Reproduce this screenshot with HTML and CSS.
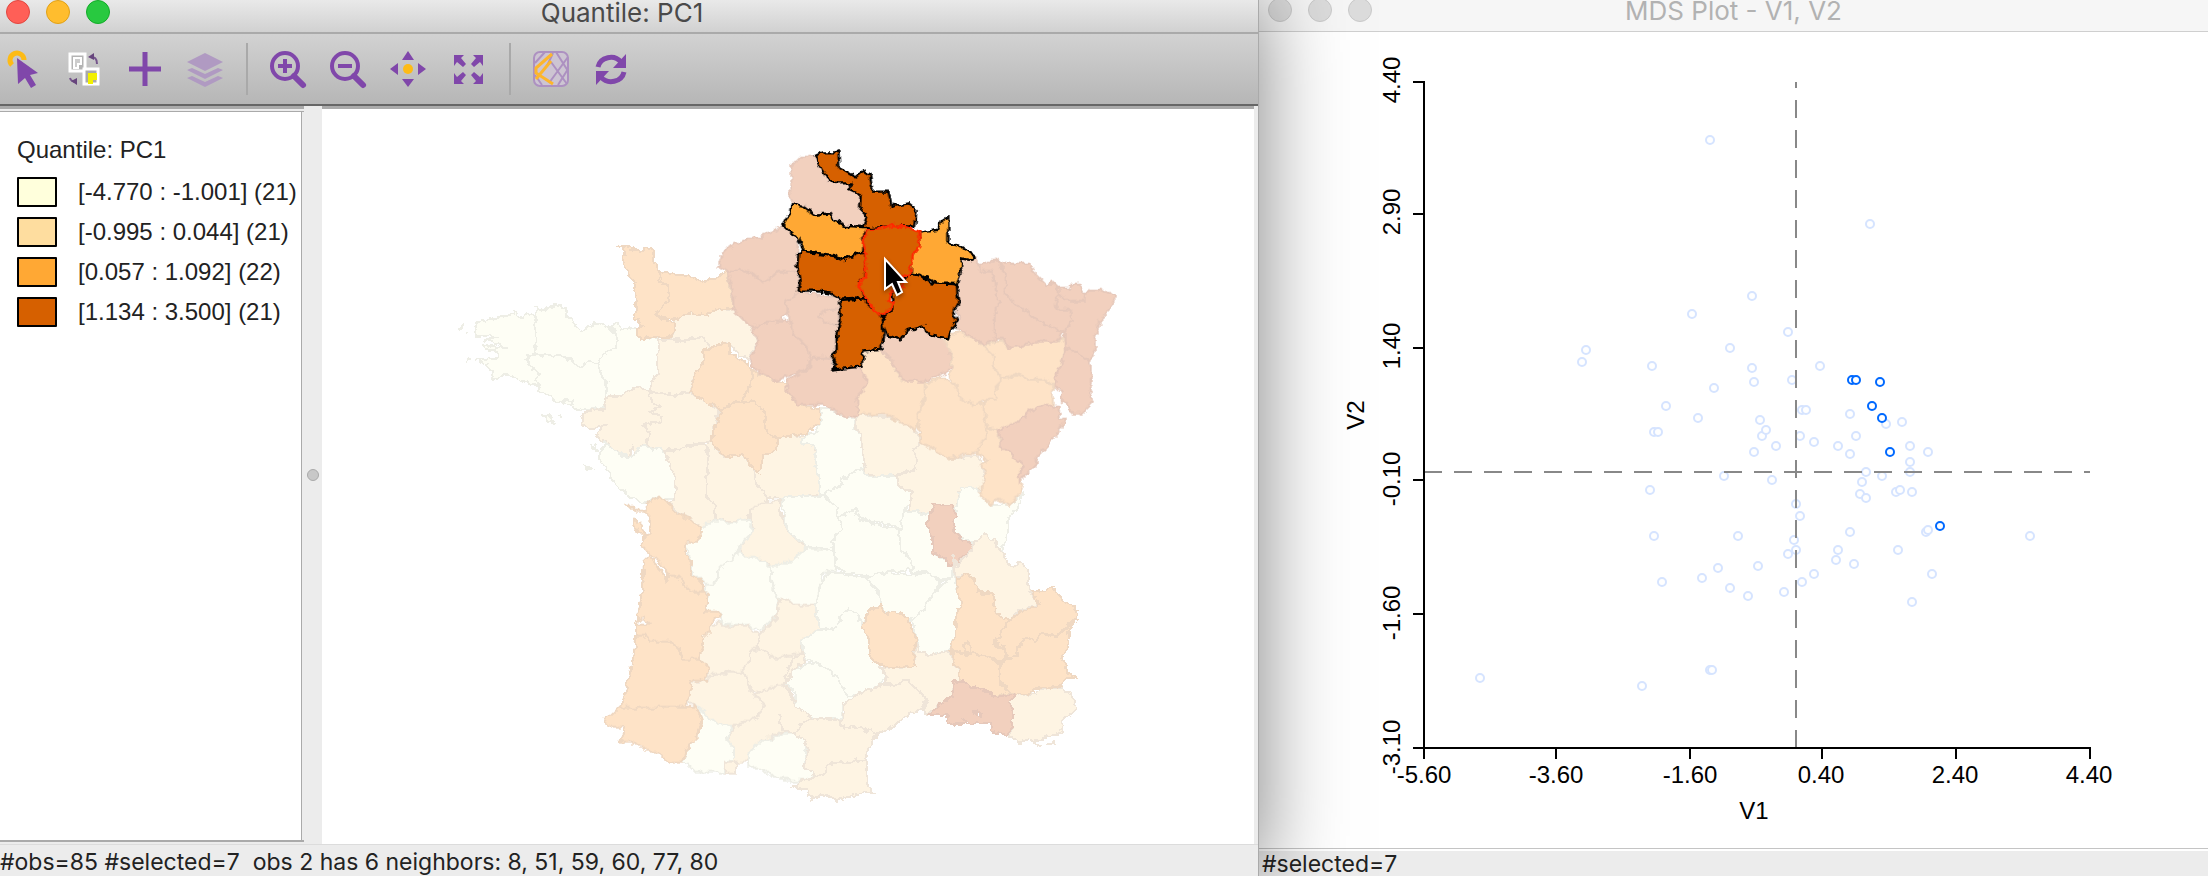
FILE: index.html
```html
<!DOCTYPE html>
<html lang="en">
<head>
<meta charset="utf-8">
<title>Quantile: PC1</title>
<link rel="stylesheet" href="styles.css">
</head>
<body>
<main class="desk">
<section class="window window-map">
  <header class="titlebar">
    <div class="lights">
      <button class="light red" aria-label="Close"></button>
      <button class="light amber" aria-label="Minimize"></button>
      <button class="light green" aria-label="Zoom"></button>
    </div>
    <h1 class="title">Quantile: PC1</h1>
  </header>
  <nav class="toolbar">
    <button class="tool" aria-label="Select"><svg viewBox="0 0 36 36"><path d="M5 14A7 7 0 1 1 17 9" fill="none" stroke="#fdbb16" stroke-width="5"/><path d="M10 7L31 22L23 24L29 34L24 37L18 27L11 33Z" fill="#8047aa"/></svg></button>
    <button class="tool" aria-label="Invert selection"><svg viewBox="0 0 36 36"><path d="M3 3h15v17H3z" fill="#b4b4b4" stroke="#fff" stroke-width="3"/><path d="M7 7h7v6h-3v4H7z" fill="#ccc" stroke="#fff" stroke-width="2"/><path d="M17 18h14v15H17z" fill="#aaa" stroke="#fff" stroke-width="3"/><path d="M21 22h9v7h-4v4h-5z" fill="#f2f000"/><path d="M23 6Q30 5 30 13M3 27Q4 31 10 31" fill="none" stroke="#75558c" stroke-width="2"/><path d="M21 6l6-4v7zM10 34V27l-6 3z" fill="#67457d"/></svg></button>
    <button class="tool" aria-label="Add"><svg viewBox="0 0 36 36"><path d="M18 1v34M2 18h32" stroke="#8047aa" stroke-width="5"/></svg></button>
    <button class="tool" aria-label="Layers"><svg viewBox="0 0 36 36" fill="#b09ac2"><path d="M18 2L36 11L18 20L0 11Z"/><path d="M0 19l5-2l13 6l13-6l5 2l-18 9zM0 27l5-2l13 6l13-6l5 2l-18 9z"/></svg></button>
    <span class="divider"></span>
    <button class="tool" aria-label="Zoom in"><svg viewBox="0 0 36 36" fill="none" stroke="#8047aa"><circle cx="15" cy="15" r="13" stroke-width="4"/><path d="M15 8v14M8 15h14" stroke-width="4"/><path d="M24 25l9 9" stroke-width="6" stroke-linecap="round"/></svg></button>
    <button class="tool" aria-label="Zoom out"><svg viewBox="0 0 36 36" fill="none" stroke="#8047aa"><circle cx="15" cy="15" r="13" stroke-width="4"/><path d="M8 15h14" stroke-width="4"/><path d="M24 25l9 9" stroke-width="6" stroke-linecap="round"/></svg></button>
    <button class="tool" aria-label="Pan"><svg viewBox="0 0 36 36" fill="#8047aa"><path d="M18 0l6 9H12zM18 36l6-8H12zM0 18l8-6v12zM36 18l-8-6v12z"/><circle cx="18" cy="18" r="5" fill="#fdbb16"/></svg></button>
    <button class="tool" aria-label="Full extent"><svg viewBox="0 0 36 36" fill="#8047aa"><path id="corner" d="M4 4h10l-3 3l5 6l-3 3l-6-5l-3 4z"/><use href="#corner" transform="matrix(-1 0 0 1 37 0)"/><use href="#corner" transform="matrix(1 0 0 -1 0 37)"/><use href="#corner" transform="matrix(-1 0 0 -1 37 37)"/></svg></button>
    <span class="divider"></span>
    <button class="tool" aria-label="Base map"><svg viewBox="0 0 36 36" fill="none"><rect x="1" y="1" width="34" height="34" rx="6" fill="#cdc5d2" stroke="#ad91c1" stroke-width="2"/><path d="M18 11L34 33M35 6L16 32M23 1L35 20M35 18L25 34M12 1L2 12M2 24L9 34M20 2L14 15" stroke="#ad91c1" stroke-width="2"/><path d="M19 3L3 17V22L20 33M3 28L18 10" stroke="#fdb62c" stroke-width="3"/></svg></button>
    <button class="tool" aria-label="Refresh"><svg viewBox="0 0 36 36" fill="none" stroke="#8047aa" stroke-width="5"><path d="M5 16A13 12 0 0 1 28 11M31 21A13 12 0 0 1 8 26"/><path d="M33 3v14H20zM3 34V20h13z" fill="#8047aa" stroke="none"/></svg></button>
  </nav>
  <div class="content">
    <aside class="legend">
      <h2 class="legend-title">Quantile: PC1</h2>
      <ul class="legend-list">
        <li><span class="swatch s1"></span>[-4.770 : -1.001] (21)</li>
        <li><span class="swatch s2"></span>[-0.995 : 0.044] (21)</li>
        <li><span class="swatch s3"></span>[0.057 : 1.092] (22)</li>
        <li><span class="swatch s4"></span>[1.134 : 3.500] (21)</li>
      </ul>
    </aside>
    <div class="splitter"><span class="grip"></span></div>
    <div class="map">
      <svg viewBox="322 109 932 735" role="img" aria-label="Map of departments">
        <defs><filter id="coast" x="440" y="140" width="700" height="680" filterUnits="userSpaceOnUse" color-interpolation-filters="sRGB"><feTurbulence type="fractalNoise" baseFrequency="0.16" numOctaves="2" seed="4" result="n"/><feDisplacementMap in="SourceGraphic" in2="n" scale="7" xChannelSelector="R" yChannelSelector="G"/></filter></defs>
        <g filter="url(#coast)">
        <g transform="translate(440 220) scale(.33333)">
          <path class="a" d="M106 320L120 305 150 300 180 290 220 285 225 272 240 295 260 282 280 290 290 300 285 345 285 400 262 412 265 435 300 455 285 480 300 500 270 490 240 480 200 460 185 475 158 480 155 450 125 425 108 420 175 412 170 390 135 388 130 375 160 378 200 385 175 370 130 362 165 355 145 345 108 350Z"/>
          <path class="a" d="M288 262L310 270 345 255 378 262 380 285 405 315 420 338 450 315 480 310 510 325 527 345 527 380 490 405 475 430 445 425 420 442 385 415 355 405 320 412 288 400 285 345Z"/>
          <path class="a" d="M265 412L288 403 355 405 385 418 420 442 445 425 475 430 480 455 497 480 495 560 445 570 400 562 385 540 350 548 320 520 295 510 300 500 285 480 300 455 265 435Z"/>
          <path class="a" d="M515 320L530 308 545 325 605 322 590 345 610 358 652 352 655 400 655 460 640 480 628 515 590 500 545 525 495 535 502 490 480 455 475 430 490 405 527 380 527 345Z"/>
          <path class="a" d="M55 325L65 318 60 330ZM76 338L80 340ZM82 420H92ZM312 585L330 590 342 608 325 605ZM352 583L366 588ZM455 675L468 680 472 695 458 685ZM437 740L455 748 440 750ZM365 545L400 538 400 552 375 550Z"/>
          <path class="b" d="M705 298L750 280 800 285 830 268 880 265 925 300 935 325 955 360 930 400 925 418 900 405 865 370 810 385 790 350 720 360 690 355 705 330Z"/>
          <path class="b" d="M655 360L690 358 720 365 790 350 810 380 793 395 790 430 765 465 748 515 700 525 628 515 640 480 655 460Z"/>
          <path class="b" d="M425 595L440 575 495 565 495 535 545 525 590 500 628 515 635 545 660 560 630 575 665 590 660 605 610 615 630 640 620 670 630 680 600 678 590 700 575 678 570 715 540 700 495 665 470 650 480 625 505 612 455 628 425 615Z"/>
          <path class="b" d="M628 515L700 525 748 518 800 550 838 568 820 630 815 665 740 675 715 690 660 690 630 680 620 665 630 640 612 615 660 605 665 590 630 575 660 560 635 545Z"/>
          <path class="a" d="M495 668L540 700 570 715 600 680 630 682 675 690 690 735 705 770 705 835 665 840 650 832 612 850 570 830 525 797 500 745 475 712Z"/>
          <path class="b" d="M675 690L715 690 740 675 795 675 805 715 800 770 800 830 825 860 825 898 785 925 750 895 715 880 690 850 705 835 705 770 690 735Z"/>
          <path class="b" d="M798 675L815 665 850 712 905 700 945 757 948 790 985 830 975 850 930 870 925 900 875 905 825 898 825 860 800 830 800 770 805 715Z"/>
          <path class="b" d="M1015 655L1060 645 1100 655 1125 690 1130 740 1140 780 1140 825 1080 828 1030 835 985 835 945 790 945 755 960 757 970 705 1010 690Z"/>
          <path class="c" d="M540 78L600 93 640 83 640 120 660 155 655 180 688 200 688 240 650 280 665 295 705 310 705 330 685 355 640 350 610 358 590 345 590 325 610 322 585 295 590 240 582 215 587 190 560 155 548 118 555 95Z"/>
          <path class="c" d="M660 157L700 160 750 170 790 185 830 172 862 155 870 200 880 262 830 268 800 285 750 280 705 298 665 295 650 275 688 240 688 200 655 180Z"/>
          <path class="c" d="M793 390L850 368 870 372 870 400 925 430 938 460 935 490 905 540 845 565 800 550 750 515 765 465 790 430Z"/>
          <path class="c" d="M938 455L980 470 1010 487 1045 490 1045 525 1080 555 1140 568 1145 605 1100 640 1060 645 1015 655 980 635 972 575 945 545 905 545 935 490Z"/>
          <path class="c" d="M845 565L905 545 945 545 972 575 980 635 1015 660 1010 690 970 705 960 757 940 750 910 705 855 712 815 665 820 630 838 590Z"/>
        </g>
        <g transform="translate(440 480) scale(.33333)">
          <path class="b" d="M930 92L960 70 1020 60 1020 100 1045 155 1080 185 1095 205 1060 240 1000 262 955 235 915 230 897 205 940 150 930 120Z"/>
          <path class="a" d="M785 140L825 120 870 128 925 118 940 155 895 205 875 240 835 270 835 295 820 315 795 310 780 295 755 290 755 245 735 190 775 185Z"/>
          <path class="a" d="M895 210L915 230 955 235 990 262 995 320 1018 360 1010 410 960 450 925 435 850 435 840 400 797 395 803 345 795 315 820 315 835 295 835 270 875 240Z"/>
          <path class="a" d="M990 262L1060 240 1095 205 1150 205 1185 215 1185 270 1150 280 1125 370 1075 378 1040 358 1018 360 995 310Z"/>
          <path class="b" d="M955 465L1010 415 1020 360 1040 358 1075 378 1125 370 1140 448 1085 480 1085 520 1010 535 950 510Z"/>
          <path class="b" d="M850 440L925 435 955 465 955 500 930 515 930 545 905 575 860 575 805 588 805 560 775 535 790 500 790 470 812 440 840 425Z"/>
          <path class="b" d="M930 515L955 505 1005 535 1085 520 1095 545 1060 575 1040 610 990 632 935 632 915 590 905 575 930 545Z"/>
          <path class="b" d="M805 588L860 580 910 575 930 630 975 680 945 715 880 738 830 730 805 712 775 680 742 665 752 605 797 605Z"/>
          <path class="b" d="M945 640L1040 610 1065 670 1105 700 1125 720 1085 735 1065 755 1020 760 950 790 940 815 915 845 888 848 855 845 882 830 880 805 860 775 890 735 945 715 975 680Z"/>
          <path class="a" d="M920 830L950 790 1020 765 1065 755 1100 790 1095 860 1130 890 1065 905 1015 895 975 875 920 855Z"/>
          <path class="a" d="M775 680L805 712 830 730 880 738 860 775 882 810 880 840 855 845 852 880 830 875 770 877 728 845 750 795 775 765 785 720Z"/>
          <path class="b" d="M855 845H888V880H855Z"/>
          <path class="c" d="M625 70L655 50 685 65 705 98 750 115 785 145 775 185 735 190 735 220 755 245 752 290 780 300 795 335 760 335 735 320 725 292 685 285 675 262 645 235 605 195 610 170 630 160 633 120 612 95ZM557 72L605 95 600 98 560 78ZM582 120L605 135 612 172 600 165 585 145Z"/>
          <path class="c" d="M628 228L640 245 660 265 682 303 685 288 725 292 735 320 765 338 803 340 797 395 835 395 840 405 812 430 810 455 790 470 790 500 775 535 728 540 720 510 685 482 630 485 620 465 588 468 588 435 628 432 610 412 592 425 605 340 612 245Z"/>
          <path class="c" d="M588 468L620 465 630 485 685 482 720 510 728 540 775 535 805 560 797 605 755 600 750 640 738 678 690 680 640 685 580 685 540 685 555 640 572 570 585 500Z"/>
          <path class="c" d="M492 715L520 700 540 680 580 685 690 680 770 680 785 720 775 765 750 795 725 845 690 852 655 815 630 815 575 785 540 788 555 745 520 740 498 730Z"/>
        </g>
        <g transform="translate(780 370) scale(.33333)">
          <path class="a" d="M125 118L150 118 200 140 228 145 222 175 240 190 255 250 250 300 215 310 185 325 180 350 145 362 130 378 120 375 118 330 105 285 105 235 65 215 80 195 110 185 125 155Z"/>
          <path class="b" d="M230 130L300 140 345 145 400 175 425 210 400 235 410 265 405 300 370 305 330 320 290 322 255 310 250 250 240 190 225 175Z"/>
          <path class="a" d="M130 380L145 362 180 350 185 325 245 295 265 320 350 318 360 350 395 370 390 405 370 420 370 475 310 460 240 445 225 418 175 445 165 405 135 385Z"/>
          <path class="b" d="M425 215L505 265 590 255 600 270 620 275 605 300 615 345 600 365 570 350 540 355 530 410 515 430 460 430 385 425 395 370 360 350 350 318 405 300 410 265 400 235Z"/>
          <path class="a" d="M5 385L60 378 130 378 165 405 175 445 185 475 155 515 160 545 130 535 90 530 75 540 70 520 30 490 15 460 10 420Z"/>
          <path class="a" d="M175 440L225 418 240 450 360 480 360 530 395 570 400 600 330 605 270 620 205 610 165 590 165 545 155 515 185 475Z"/>
          <path class="a" d="M370 420L385 425 455 430 440 465 455 500 460 550 500 570 520 590 520 620 480 635 440 605 395 612 400 590 360 530 360 480Z"/>
          <path class="a" d="M540 355L570 350 600 365 632 407 690 403 728 373 710 420 685 440 683 490 665 545 640 515 615 492 590 515 550 508 520 480 525 430 535 390Z"/>
          <path class="d" d="M460 402L515 405 525 430 520 480 550 510 580 520 570 545 540 565 530 588 505 585 495 565 460 550 455 500 438 465 450 435Z"/>
        </g>
        <g transform="translate(780 560) scale(.33333)">
          <path class="a" d="M465 90L520 45 535 100 545 130 530 160 525 230 510 270 450 285 420 275 410 235 395 175 430 150Z"/>
          <path class="a" d="M260 50L300 38 400 45 440 38 480 65 465 95 430 150 390 180 345 150 325 165 305 135 290 90Z"/>
          <path class="a" d="M125 70L145 38 170 38 235 55 260 55 290 90 305 135 265 155 245 200 235 165 205 145 180 175 170 205 120 208 105 130Z"/>
          <path class="a" d="M115 210L170 205 180 175 205 145 235 165 247 200 268 240 270 290 300 315 318 345 300 375 260 390 240 408 200 405 170 350 120 310 75 300 65 240Z"/>
          <path class="a" d="M20 370L40 330 100 308 130 318 170 350 200 405 240 408 190 430 185 475 100 480 85 460 45 435 45 400Z"/>
          <path class="b" d="M20 370L40 330 75 308 70 282 35 295 20 335 15 375 45 435 85 460 95 478 65 488 45 520 5 510 0 460"/>
          <path class="b" d="M520 -20L525 50 565 42 595 75 595 100 640 100 645 160 690 180 720 150 775 135 755 100 745 75 748 30 720 5 690 18 650 -50 615 -78 580 -50 570 -25 530 18Z"/>
          <path class="b" d="M410 250L420 275 450 285 510 272 520 310 535 325 540 360 515 375 515 410 480 430 440 465 430 450 440 420 380 360 345 378 315 370 320 350 300 320 350 325 405 315 405 280Z"/>
          <path class="b" d="M190 430L260 390 310 375 345 378 380 360 440 415 430 445 390 460 340 500 290 522 235 500 190 510 180 490 195 460Z"/>
          <path class="b" d="M45 520L65 488 120 475 180 480 195 510 235 500 290 522 265 560 258 605 230 598 205 610 145 610 140 635 115 650 70 625 85 580 75 545Z"/>
          <path class="b" d="M40 680L70 660 140 640 145 610 205 610 230 598 260 605 260 670 280 700 260 695 200 710 175 722 140 705 95 718 80 690Z"/>
          <path class="b" d="M705 402L740 408 800 385 850 382 885 420 887 445 850 480 850 515 800 530 765 545 740 540 715 548 690 525 700 470 690 425ZM762 555L785 560ZM805 555L825 547Z"/>
          <path class="c" d="M265 155L305 135 320 165 345 150 385 175 408 240 400 275 405 315 340 325 285 305 270 290 268 240 247 200Z"/>
          <path class="c" d="M530 55L565 42 595 75 595 100 640 100 645 160 690 180 665 205 665 235 640 250 675 270 680 295 660 300 620 290 590 282 560 280 512 270 525 230 530 160 545 130 535 100Z"/>
          <path class="c" d="M690 180L720 155 775 138 755 90 785 92 820 82 850 125 885 140 893 172 860 195 830 230 790 220 760 245 740 230 710 270 715 290 680 295 675 265 640 245 665 230 665 205Z"/>
          <path class="c" d="M660 305L715 290 710 265 740 230 765 245 790 220 830 232 885 182 865 215 870 240 845 290 865 340 887 352 860 355 845 378 800 385 770 385 740 405 700 400 685 390 660 360Z"/>
          <path class="c" d="M515 275L560 285 590 282 655 305 660 345 660 370 690 400 660 410 610 395 580 380 540 362 535 320 520 310ZM550 255L565 250 578 262 570 275 552 272Z"/>
          <path class="d" fill-rule="evenodd" d="M520 365L545 362 580 380 660 412 705 402 690 425 700 470 695 500 680 527 635 515 632 490 580 490 550 480 560 492 505 490 500 468 450 465 480 430 515 410ZM578 455L607 460 600 472Z"/>
        </g>
        <g transform="translate(690 120) scale(.33333)">
          <path class="c" d="M515 700L575 690 605 725 635 780 710 785 705 830 690 870 680 930 590 885 505 880 500 835 520 810 532 780 510 745Z"/>
          <path class="d" d="M85 440L100 395 155 360 210 352 250 335 275 315 320 350 325 400 325 460 265 455 220 490 190 460 150 450 115 455Z"/>
          <path class="d" d="M115 455L150 450 190 460 220 490 265 455 320 460 330 515 285 545 290 575 270 605 220 610 185 625 130 570 130 535Z"/>
          <path class="d" d="M285 545L330 515 450 535 445 600 440 640 435 690 425 710 360 715 350 680 310 640 300 600ZM385 590L410 568 450 565 450 612 400 608Z"/>
          <path class="d" d="M185 625L220 610 270 605 300 600 310 640 350 680 360 715 355 745 300 765 260 785 190 745 180 715 205 660Z"/>
          <path class="d" d="M290 780L360 745 360 715 425 712 430 748 510 745 532 780 520 810 500 835 505 885 470 890 395 853 330 855 295 825Z"/>
          <path class="d" d="M305 135L335 110 375 107 390 145 415 185 475 190 510 230 515 270 530 290 520 320 470 320 430 290 400 280 375 285 345 255 310 250 300 235Z"/>
          <path class="d" d="M575 690L582 640 630 655 655 625 700 620 715 650 775 655 785 720 785 745 740 770 700 785 640 780 605 725Z"/>
        </g>
        <g transform="translate(900 240) scale(.33333)">
          <path class="c" d="M250 315L305 300 325 325 420 305 470 305 490 292 495 325 485 370 468 400 465 435 430 420 385 420 350 402 310 420 285 395 280 350Z"/>
          <path class="c" d="M130 300L172 275 210 290 250 315 280 345 280 385 310 415 290 440 285 475 250 480 225 497 180 475 170 440 145 405 155 390 155 340Z"/>
          <path class="c" d="M310 418L350 402 385 420 430 420 460 440 455 460 460 495 385 515 355 545 295 570 260 560 250 485 285 475 290 440Z"/>
          <path class="c" d="M75 430L130 410 170 440 180 475 225 497 250 490 258 560 258 590 230 635 145 655 65 610 55 560 50 530 75 480Z"/>
          <path class="c" d="M258 565L295 570 300 620 330 635 370 680 355 705 370 735 355 770 325 795 290 775 272 797 240 760 255 710 245 670 265 660 230 640 258 590Z"/>
          <path class="d" d="M180 60L230 50 240 90 275 90 295 185 285 230 285 300 250 312 210 290 170 262 180 240 165 200 175 130Z"/>
          <path class="d" d="M240 75L295 60 300 80 318 100 315 165 370 200 400 235 490 275 470 305 420 305 325 325 310 295 285 295 285 230 295 185 275 90 240 95Z"/>
          <path class="d" d="M295 65L335 72 385 70 405 100 440 138 455 125 475 145 475 165 465 190 480 210 510 210 515 245 490 275 430 250 370 210 315 165 318 100Z"/>
          <path class="d" d="M475 142L510 145 515 132 540 132 550 155 605 150 648 168 630 205 600 245 585 290 588 320 570 365 535 340 495 325 492 275 515 245 510 210 480 210 465 190 475 165 500 180 550 182 558 155 550 182 500 180 475 165Z"/>
          <path class="d" d="M500 325L535 340 570 365 572 400 570 450 577 485 548 523 515 520 500 490 485 485 485 455 465 440 468 400 485 370Z"/>
          <path class="d" d="M295 570L355 545 385 515 430 495 475 500 480 535 498 540 480 570 430 630 412 650 410 675 380 700 360 725 355 705 370 680 330 635 300 620 305 600Z"/>
        </g>
        <g class="picked" transform="translate(690 120) scale(.33333)">
          <path class="hot" d="M375 107L395 97 435 97 445 92 448 145 475 160 495 172 520 152 540 165 548 215 595 215 605 260 655 250 680 270 675 320 610 318 530 325 520 320 530 285 510 265 512 225 480 210 480 190 440 190 415 180 395 150Z"/>
          <path class="warm" d="M305 250L340 258 375 285 420 280 430 300 470 318 535 322 520 345 520 395 500 400 460 418 430 405 390 400 340 395 325 355 280 315 300 280Z"/>
          <path class="hot" d="M325 400L340 395 430 408 460 420 500 400 525 395 530 460 510 485 525 535 460 540 420 520 370 512 325 512 330 490 322 440Z"/>
          <path class="hot" d="M450 540L522 535 540 560 578 590 580 650 570 690 520 695 515 740 430 748 435 725 425 705 440 690 440 640 452 600Z"/>
          <path class="hot" d="M665 462L690 465 720 490 800 492 805 550 790 580 805 605 785 625 775 655 715 645 700 618 655 630 630 658 590 645 575 600 605 570 610 540 605 515 650 470Z"/>
          <path class="warm" d="M688 338L745 330 755 305 775 290 775 370 810 378 855 410 840 420 815 415 812 460 800 492 740 490 690 465 662 460 665 410 688 375Z"/>
          <path class="hot current" d="M530 328L570 325 610 315 650 322 688 335 688 380 668 405 665 435 655 470 640 465 640 500 605 515 598 545 610 550 590 580 578 588 555 575 535 545 520 515 505 500 515 480 530 460 525 390 518 370 525 345Z"/>
        </g>
        </g>
        <path class="pointer" d="M885 259V289L892 284L897 295L902 292L898 282H906Z"/>
      </svg>
    </div>
  </div>
  <footer class="status">#obs=85 #selected=7&nbsp; obs 2 has 6 neighbors: 8, 51, 59, 60, 77, 80</footer>
</section>
<section class="window window-plot">
  <header class="titlebar">
    <div class="lights">
      <button class="light" aria-label="Close"></button>
      <button class="light" aria-label="Minimize"></button>
      <button class="light" aria-label="Zoom"></button>
    </div>
    <h1 class="title">MDS Plot - V1, V2</h1>
  </header>
  <div class="plot">
    <svg viewBox="1259 32 949 816" role="img" aria-label="MDS scatter plot">
      <g id="points" class="points"></g>
      <path class="guide" d="M1796 748V82M1424 472H2090"/>
      <path class="axis" d="M1413 82H1424V748H2090M1413 214H1424M1413 348H1424M1413 480H1424M1413 614H1424M1413 748H1424V759M1556 748V759M1690 748V759M1822 748V759M1956 748V759M2090 747V759"/>
      <g class="labels">
        <text x="1424" y="783">-5.60</text><text x="1556" y="783">-3.60</text><text x="1690" y="783">-1.60</text>
        <text x="1821" y="783">0.40</text><text x="1955" y="783">2.40</text><text x="2089" y="783">4.40</text>
        <text x="1754" y="819">V1</text>
        <g transform="rotate(-90)">
          <text x="-80" y="1400">4.40</text><text x="-212" y="1400">2.90</text><text x="-346" y="1400">1.40</text>
          <text x="-479" y="1400">-0.10</text><text x="-613" y="1400">-1.60</text><text x="-747" y="1400">-3.10</text>
          <text x="-415" y="1364">V2</text>
        </g>
      </g>
    </svg>
  </div>
  <footer class="status">#selected=7</footer>
</section>
</main>
<script src="plot.js"></script>
</body>
</html>
```
FILE: styles.css
```css
* { box-sizing: border-box; }
body { margin: 0; background: #fff; font-family: "Liberation Sans", Arial, sans-serif; color: #222; }
button { padding: 0; border: 0; background: none; }
svg { display: block; width: 100%; height: 100%; }

.desk { display: grid; grid-template-columns: 1259fr 949fr; height: 100vh; overflow: hidden; }
.window { position: relative; display: flex; flex-direction: column; min-width: 0; min-height: 0; }
.window-map { z-index: 1; border-right: 1px solid #aaa; background: #ececec; box-shadow: 0 0 80px 0 rgba(0, 0, 0, .5); }
.window-plot { margin-top: -2px; background: #fff; }

.titlebar { position: relative; display: flex; justify-content: center; height: 34px; flex: none; border-bottom: 2px solid #aaa; background: linear-gradient(#e9e9e9, #d1d1d1); padding-right: 14px; }
.window-plot .titlebar { border-bottom: 1px solid #cfcfcf; background: #f6f6f6; padding-right: 0; }
.lights { position: absolute; left: 6px; top: 0; display: flex; gap: 16px; }
.window-plot .lights { left: 9px; }
.light { width: 24px; height: 24px; border-radius: 50%; background: #dcdcdc; border: 1px solid #cacaca; }
.red { background: #ff5f57; border-color: #e2463f; }
.amber { background: #ffbd2e; border-color: #e1a116; }
.green { background: #28c940; border-color: #12ac28; }
.title { margin: 0; font: 400 26px/26px Inter, sans-serif; color: #4a4a4a; }
.window-plot .title { color: #b2b2b2; }

.toolbar { display: flex; align-items: center; gap: 24px; height: 72px; flex: none; padding: 0 7px; border-bottom: 2px solid #666; background: linear-gradient(#d2d2d2, #b6b6b6); }
.tool { width: 36px; height: 36px; }
.tool svg { overflow: visible; }
.divider { width: 2px; height: 52px; margin: 0 -2px 0 -1px; background: #a9a9a9; }

.content { display: flex; flex: 1; min-height: 0; }
.legend { width: 304px; flex: none; margin-bottom: 2px; border-top: 3px solid #aaa; background: #fff; padding: 26px 0 0 17px; box-shadow: inset 0 2px #ececec, inset 0 3px #aaa, inset -2px 0 #ececec, inset -3px 0 #aaa; border-bottom: 2px solid #aaa; }
.legend-title { margin: 0 0 12px; font-size: 24px; line-height: 30px; font-weight: 400; }
.legend-list { display: grid; gap: 10px; margin: 0; padding: 0; list-style: none; font-size: 24px; line-height: 30px; white-space: nowrap; }
.legend-list li { display: flex; gap: 21px; }
.swatch { width: 40px; height: 30px; border: 2px solid #000; border-radius: 1px; }
.s1 { background: #ffffdc; }
.s2 { background: #fedd9f; }
.s3 { background: #ffa834; }
.s4 { background: #d66000; }
.splitter { display: grid; place-items: center; width: 18px; flex: none; background: #ececec; }
.grip { width: 12px; height: 12px; border: 1px solid #aaa; border-radius: 50%; background: #c8c8c8; }
.map { flex: 1; min-width: 0; margin-right: 4px; border-top: 3px solid #aaa; background: #fff; }

.a, .b, .c, .d { stroke-width: 6; shape-rendering: crispEdges; }
.a { fill: #fefef5; stroke: #eeeee6; }
.b { fill: #fef4e3; stroke: #efe5d9; }
.c { fill: #fee3c7; stroke: #efd8c2; }
.d { fill: #f2d0be; stroke: #e6c8ba; }
.picked { stroke: #000; stroke-width: 7; }
.hot { fill: #d66000; }
.warm { fill: #ffa834; }
.current { stroke: #ff2a00; }
.pointer { fill: #000; stroke: #fff; stroke-width: 2; filter: drop-shadow(0 2px 2px rgba(0, 0, 0, .4)); }

.plot { flex: 1; min-height: 0; }
.points { fill: #fff; stroke: #d6e4ff; stroke-width: 2; }
.points .on { stroke: #0069ff; }
.guide { fill: none; stroke: #888; stroke-width: 2; stroke-dasharray: 18 12; }
.axis { fill: none; stroke: #000; stroke-width: 2; }
.labels { font-size: 24px; text-anchor: middle; fill: #000; }

.status { flex: none; height: 32px; background: #ececec; border-top: 1px solid #dcdcdc; font: 400 23px/34px Inter, sans-serif; white-space: pre; overflow: hidden; }
.window-plot .status { height: 28px; padding-left: 3px; line-height: 30px; border-top: 1px solid #c4c4c4; box-shadow: inset 0 2px #fff; }
```
FILE: plot.js
```js
const plain = [
  [1710,140],[1752,296],[1692,314],[1586,350],[1582,362],[1730,348],[1652,366],[1752,368],[1754,382],[1714,388],
  [1666,406],[1698,418],[1760,420],[1762,436],[1766,430],[1654,432],[1658,432],[1776,446],[1754,452],[1870,224],
  [1788,332],[1820,366],[1792,380],[1802,410],[1806,410],[1850,414],[1886,424],[1902,422],[1800,436],[1814,442],
  [1856,436],[1838,446],[1850,454],[1910,446],[1928,452],[1910,462],[1910,472],[1866,472],[1882,476],[1772,480],
  [1862,482],[1860,494],[1866,498],[1896,492],[1900,490],[1912,492],[1796,504],[1800,516],[1794,540],[1796,550],
  [1788,554],[1758,566],[1850,532],[1926,532],[1928,530],[2030,536],[1838,550],[1836,560],[1898,550],[1854,564],
  [1814,574],[1932,574],[1802,582],[1784,592],[1748,596],[1912,602],[1724,476],[1650,490],[1654,536],[1738,536],
  [1718,568],[1702,578],[1662,582],[1730,588],[1710,670],[1712,670],[1480,678],[1642,686]
];
const selected = [[1852,380],[1856,380],[1880,382],[1872,406],[1882,418],[1890,452],[1940,526]];
const layer = document.getElementById("points");

function draw(list, name) {
  for (const [x, y] of list) {
    const c = document.createElementNS("http://www.w3.org/2000/svg", "circle");
    c.setAttribute("cx", x);
    c.setAttribute("cy", y);
    c.setAttribute("r", 4);
    if (name) c.setAttribute("class", name);
    layer.append(c);
  }
}
draw(plain);
draw(selected, "on");
```
